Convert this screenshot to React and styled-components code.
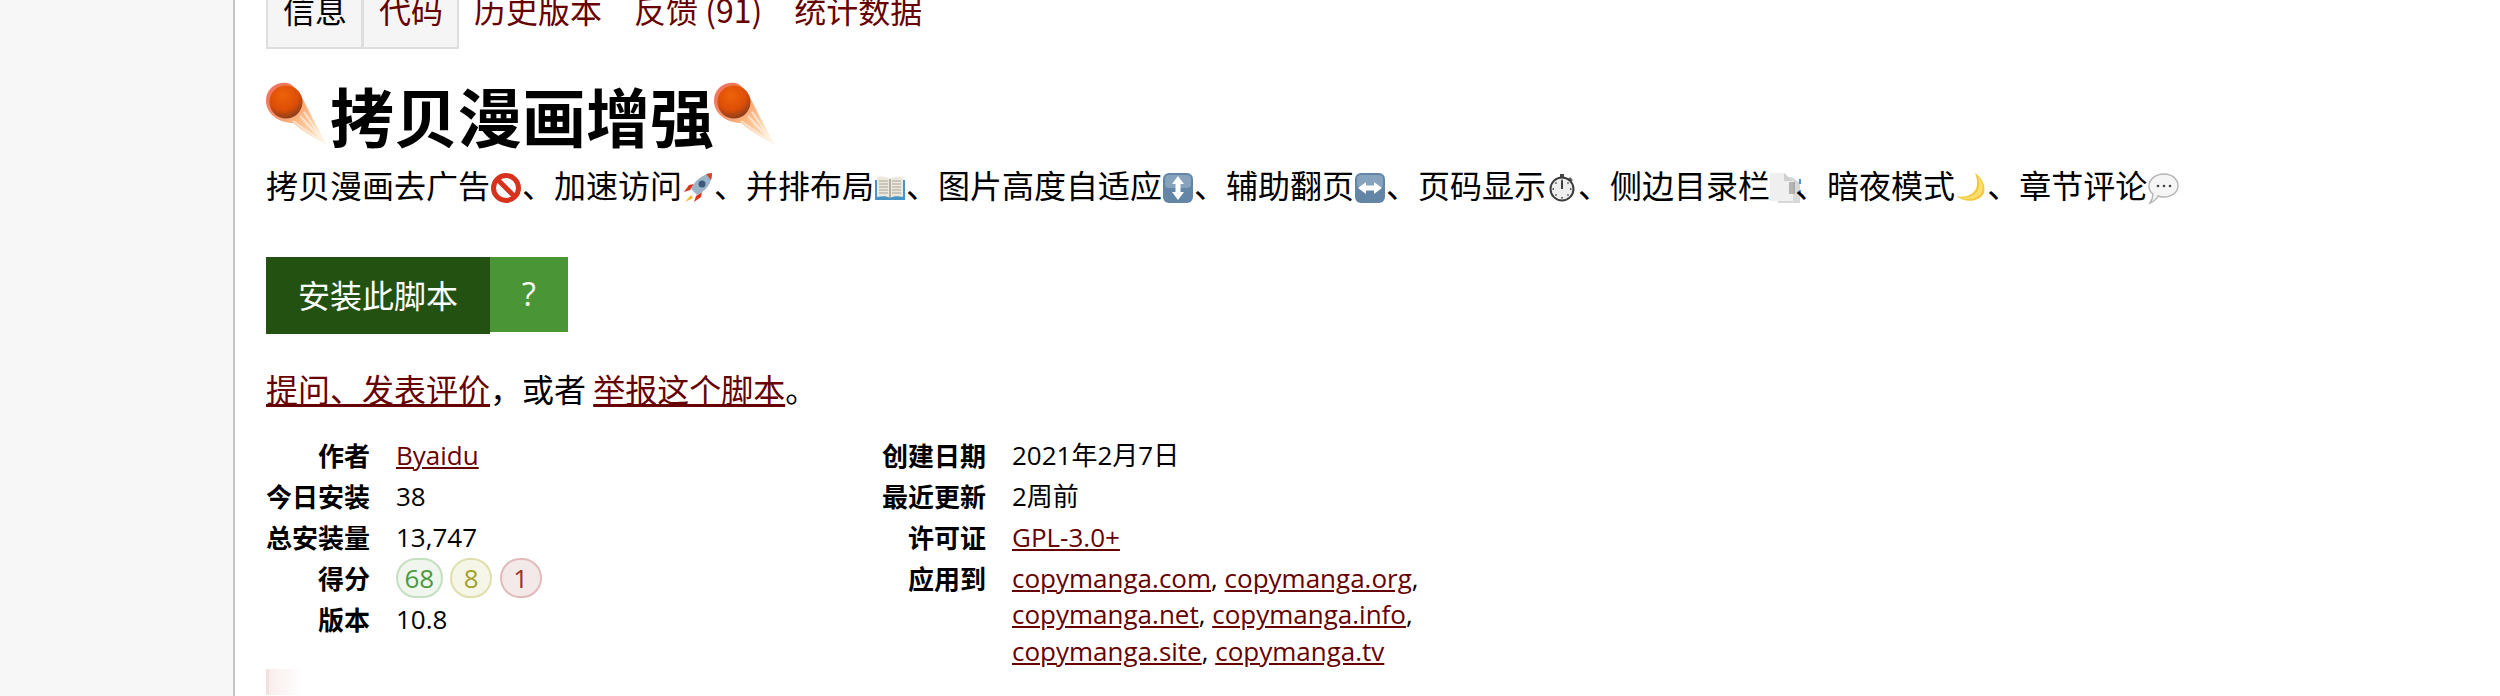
import React from 'react'
import styled, { createGlobalStyle } from 'styled-components'

const GlobalStyle = createGlobalStyle`
  html, body {
    margin: 0;
    height: 696px;
    overflow: hidden;
    background: #fff;
    color: #000;
    font-family: "Open Sans", "Noto Sans CJK SC", sans-serif;
  }
  a { color: #670000; }
`

const Page = styled.div`
  display: grid;
  grid-template-columns: 235px 1fr;
  height: 696px;
  overflow: hidden;
`

const Sidebar = styled.div`
  background: #f7f7f7;
  border-right: 2px solid #c4c4c4;
`

const Main = styled.main`
  padding-left: 31px;
  min-width: 0;
`

const Tabs = styled.ul`
  display: flex;
  list-style: none;
  margin: -16px 0 0;
  padding: 0;
  font-size: 32px;
  line-height: 50px;
  white-space: nowrap;
  font-family: "Noto Sans CJK SC", sans-serif;
`

const Tab = styled.li`
  box-sizing: border-box;
  height: 65px;
  padding: 0 16px;
  ${p => p.$boxed && `
    padding: 0 14px 0 15px;
    margin-right: -1px;
    background: #f5f5f5;
    border: 2px solid #dedede;
    border-top: 0;
    width: 97px;
  `}
  a { text-decoration: none; }
  color: ${p => p.$current ? '#000' : '#670000'};
`

const Title = styled.h2`
  display: flex;
  align-items: center;
  margin: 25px 0 0;
  height: 80px;
  font-size: 64px;
  line-height: 80px;
  font-weight: 700;
  font-family: "Noto Sans CJK SC", sans-serif;
`

const Description = styled.p`
  margin: 7px 0 0;
  font-size: 32px;
  line-height: 46px;
  white-space: nowrap;
  font-family: "Noto Sans CJK SC", sans-serif;
`

const InstallArea = styled.div`
  display: flex;
  align-items: flex-start;
  margin-top: 50px;
  font-family: "Noto Sans CJK SC", sans-serif;
`

const InstallButton = styled.a`
  box-sizing: border-box;
  width: 224px;
  height: 77px;
  background: #235112;
  color: #fff;
  font-size: 32px;
  line-height: 75px;
  text-align: center;
  text-decoration: none;
`

const HelpButton = styled.a`
  width: 78px;
  height: 75px;
  background: #4a9636;
  color: #fff;
  font-family: "Open Sans", sans-serif;
  font-size: 32px;
  line-height: 74px;
  text-align: center;
  text-decoration: none;
`

const Feedback = styled.p`
  margin: 32px 0 0;
  font-size: 32px;
  line-height: 44px;
  font-family: "Noto Sans CJK SC", sans-serif;
`

const Meta = styled.div`
  display: flex;
  margin-top: 27px;
`

const MetaList = styled.dl`
  display: grid;
  grid-template-columns: 104px ${p => p.$valueWidth}px;
  column-gap: 26px;
  row-gap: 4.6px;
  margin: 0;
  font-size: 26px;
  line-height: 36.4px;
  align-content: start;
`

const Label = styled.dt`
  font-weight: 700;
  text-align: right;
  font-family: "Noto Sans CJK SC", sans-serif;
`

const Value = styled.dd`
  margin: 0;
`

const Badges = styled.span`
  display: flex;
  gap: 7.5px;
  height: 36.4px;
  align-items: center;
`

const palette = {
  good: ['#c6dfc0', '#f0f6ee', '#4a9a3c'],
  ok: ['#dfdfae', '#f6f6e8', '#a3a02a'],
  bad: ['#e2baba', '#f3e9e9', '#9c3030'],
}

const Badge = styled.span`
  box-sizing: border-box;
  min-width: 42px;
  height: 40px;
  padding: 0 6.5px;
  border-radius: 20px;
  border: 2px solid ${p => palette[p.$kind][0]};
  background: ${p => palette[p.$kind][1]};
  color: ${p => palette[p.$kind][2]};
  line-height: 36px;
  text-align: center;
`

const FadeBlock = styled.div`
  width: 34px;
  height: 26px;
  border-left: 3px solid #f1e2e0;
  background: linear-gradient(to right, #f8eeec, #fff);
`

const Glyph = styled.svg`
  display: inline-block;
  width: ${p => p.$size || 32}px;
  height: ${p => p.$size || 32}px;
  margin-right: ${p => p.$trim || 0}px;
  vertical-align: -6px;
  flex: none;
  overflow: visible;
`

const Comet = ({ id }) => (
  <Glyph $size={64} viewBox="0 0 64 64">
    <defs>
      <linearGradient id={`tail${id}`} x1="0.15" y1="0.15" x2="1" y2="1">
        <stop offset="0" stopColor="#ee5030" />
        <stop offset="0.45" stopColor="#fa9c58" />
        <stop offset="1" stopColor="#fdd090" stopOpacity="0.6" />
      </linearGradient>
      <radialGradient id={`ball${id}`} cx="0.42" cy="0.3" r="0.75">
        <stop offset="0" stopColor="#ee6208" />
        <stop offset="0.6" stopColor="#dc4e08" />
        <stop offset="1" stopColor="#7c3c20" />
      </radialGradient>
      <filter id={`soft${id}`}><feGaussianBlur stdDeviation="0.7" /></filter>
    </defs>
    <g filter={`url(#soft${id})`}>
      <path d="M0 19C0 6 11 -1 22 1C31 4 37 17 43 29C49 42 56 54 60 62C50 57 38 50 27 41C12 41 0 31 0 19Z" fill={`url(#tail${id})`} opacity="0.78" />
      <path d="M34 34C41 42 51 52 59 61M27 39C36 46 47 53 57 60M38 30C44 39 51 49 59 60" stroke="#fff" strokeWidth="2" fill="none" opacity="0.55" />
    </g>
    <circle cx="20" cy="20" r="16.500" fill={`url(#ball${id})`} />
  </Glyph>
)

const NoEntry = () => (
  <Glyph viewBox="0 0 32 32">
    <circle cx="16" cy="16" r="12.500" fill="#fff" stroke="#d8321c" strokeWidth="5" />
    <path d="M7 7L25 25" stroke="#d8321c" strokeWidth="5" />
  </Glyph>
)

const Rocket = () => (
  <Glyph viewBox="0 0 32 32">
    <path d="M8 18L2 20L7 13L12 12ZM14 24L12 30L19 25L20 20Z" fill="#e0321c" />
    <path d="M9 23L3 30L11 26Z" fill="#f7b52c" />
    <path d="M9 17C13 8 21 2 30 1C30 11 24 19 15 23Z" fill="#9cb4c8" />
    <path d="M24 2L30 1C30 4 29.500 6 29 8Z" fill="#d8402a" />
    <circle cx="20" cy="12" r="3.500" fill="#3d5a78" />
  </Glyph>
)

const Book = () => (
  <Glyph viewBox="0 0 32 32">
    <path d="M1 8H31V28H1Z" fill="#4a93c2" />
    <path d="M3 5C8 4 13 5 16 7C19 5 24 4 29 5V25C24 24 19 24 16 26C13 24 8 24 3 25Z" fill="#ece8dc" />
    <path d="M5 9H14M5 12H14M5 15H14M5 18H14M5 21H14M18 9H27M18 12H27M18 15H27M18 18H27M18 21H27" stroke="#a5a29a" strokeWidth="1.200" />
    <path d="M16 7V26" stroke="#77756e" />
  </Glyph>
)

const ArrowKey = ({ rotate }) => (
  <Glyph viewBox="0 0 32 32">
    <rect x="1" y="1" width="30" height="30" rx="6" fill="#6486a6" />
    <rect x="3" y="3" width="26" height="13" rx="4" fill="#85a3bd" />
    <path d="M16 4L22 12H18.500V20H22L16 28L10 20H13.500V12H10Z" fill="#fff" transform={rotate ? 'rotate(90 16 16)' : undefined} />
  </Glyph>
)

const Stopwatch = () => (
  <Glyph viewBox="0 0 32 32">
    <path d="M14 2H18V6H14Z" fill="#444" />
    <path d="M24 5L27 8L25 10L22 7Z" fill="#666" />
    <circle cx="16" cy="17" r="11.500" fill="#eeeeee" stroke="#3c3c3c" strokeWidth="2" />
    <path d="M16 17V9" stroke="#111" strokeWidth="1.600" />
    <path d="M16 7.500V9M16 25V26.500M6.500 17H8M24 17H25.500M9.500 10.500L10.500 11.500M22.500 10.500L21.500 11.500M9.500 23.500L10.500 22.500M22.500 23.500L21.500 22.500" stroke="#333" strokeWidth="1.400" />
  </Glyph>
)

const Tabbed = () => (
  <Glyph $trim={-7} viewBox="0 0 32 32">
    <path d="M8 5H22L30 11V31H8Z" fill="#d8d8d8" />
    <path d="M0 1H14L23 9V29H0Z" fill="#efefef" />
    <path d="M14 1L23 9H14Z" fill="#cfcfcf" />
    <path d="M19 10H25V22H19Z" fill="#8d8d8d" opacity="0.6" />
    <path d="M29 7H31V12H29ZM29 18H31V23H29Z" fill="#4a94dc" />
  </Glyph>
)

const Moon = () => (
  <Glyph viewBox="0 0 32 32">
    <path d="M20 1C27 6 31 14 29 21C26 28 13 33 1 24C9 26 17 24 21 17C23 12 22 6 20 1Z" fill="#f4c83c" />
    <path d="M4 25C11 27 19 25 23 18C25 14 24 9 23 5C27 10 29 15 27 20C24 26 13 30 4 25Z" fill="#fbdf70" />
  </Glyph>
)

const Speech = () => (
  <Glyph viewBox="0 0 32 32">
    <path d="M17 2C25 2 31 7 31 14C31 20 25 25 17 25C15 25 13 25 11 24C10 26 8 29 3 31C5 28 6 25 6 22C3 20 2 17 2 14C2 7 9 2 17 2Z" fill="#f5f5f5" stroke="#b4b4b4" strokeWidth="1.400" />
    <circle cx="11" cy="14" r="1.300" fill="#444" />
    <circle cx="17" cy="14" r="1.300" fill="#444" />
    <circle cx="23" cy="14" r="1.300" fill="#444" />
  </Glyph>
)

const App = () => {
  return (
    <Page>
      <GlobalStyle />
      <Sidebar />
      <Main>
        <Tabs>
          <Tab $boxed $current>信息</Tab>
          <Tab $boxed><a href="#code">代码</a></Tab>
          <Tab><a href="#versions">历史版本</a></Tab>
          <Tab><a href="#feedback">反馈 (91)</a></Tab>
          <Tab><a href="#stats">统计数据</a></Tab>
        </Tabs>
        <Title><Comet id="a" />拷贝漫画增强<Comet id="b" /></Title>
        <Description>
          拷贝漫画去广告<NoEntry />、加速访问<Rocket />、并排布局<Book />、图片高度自适应<ArrowKey />、辅助翻页<ArrowKey rotate />、页码显示<Stopwatch />、侧边目录栏<Tabbed />、暗夜模式<Moon />、章节评论<Speech />
        </Description>
        <InstallArea>
          <InstallButton href="#install">安装此脚本</InstallButton>
          <HelpButton href="#help">?</HelpButton>
        </InstallArea>
        <Feedback>
          <a href="#ask">提问、发表评价</a>，或者 <a href="#report">举报这个脚本</a>。
        </Feedback>
        <Meta>
          <MetaList $valueWidth={486}>
            <Label>作者</Label>
            <Value><a href="#author">Byaidu</a></Value>
            <Label>今日安装</Label>
            <Value>38</Value>
            <Label>总安装量</Label>
            <Value>13,747</Value>
            <Label>得分</Label>
            <Value>
              <Badges>
                <Badge $kind="good">68</Badge>
                <Badge $kind="ok">8</Badge>
                <Badge $kind="bad">1</Badge>
              </Badges>
            </Value>
            <Label>版本</Label>
            <Value>10.8</Value>
          </MetaList>
          <MetaList $valueWidth={420}>
            <Label>创建日期</Label>
            <Value>2021年2月7日</Value>
            <Label>最近更新</Label>
            <Value>2周前</Value>
            <Label>许可证</Label>
            <Value><a href="#license">GPL-3.0+</a></Value>
            <Label>应用到</Label>
            <Value>
              <a href="#com">copymanga.com</a>, <a href="#org">copymanga.org</a>, <a href="#net">copymanga.net</a>, <a href="#info">copymanga.info</a>, <a href="#site">copymanga.site</a>, <a href="#tv">copymanga.tv</a>
            </Value>
          </MetaList>
        </Meta>
        <FadeBlock />
      </Main>
    </Page>
  )
}

export default App
